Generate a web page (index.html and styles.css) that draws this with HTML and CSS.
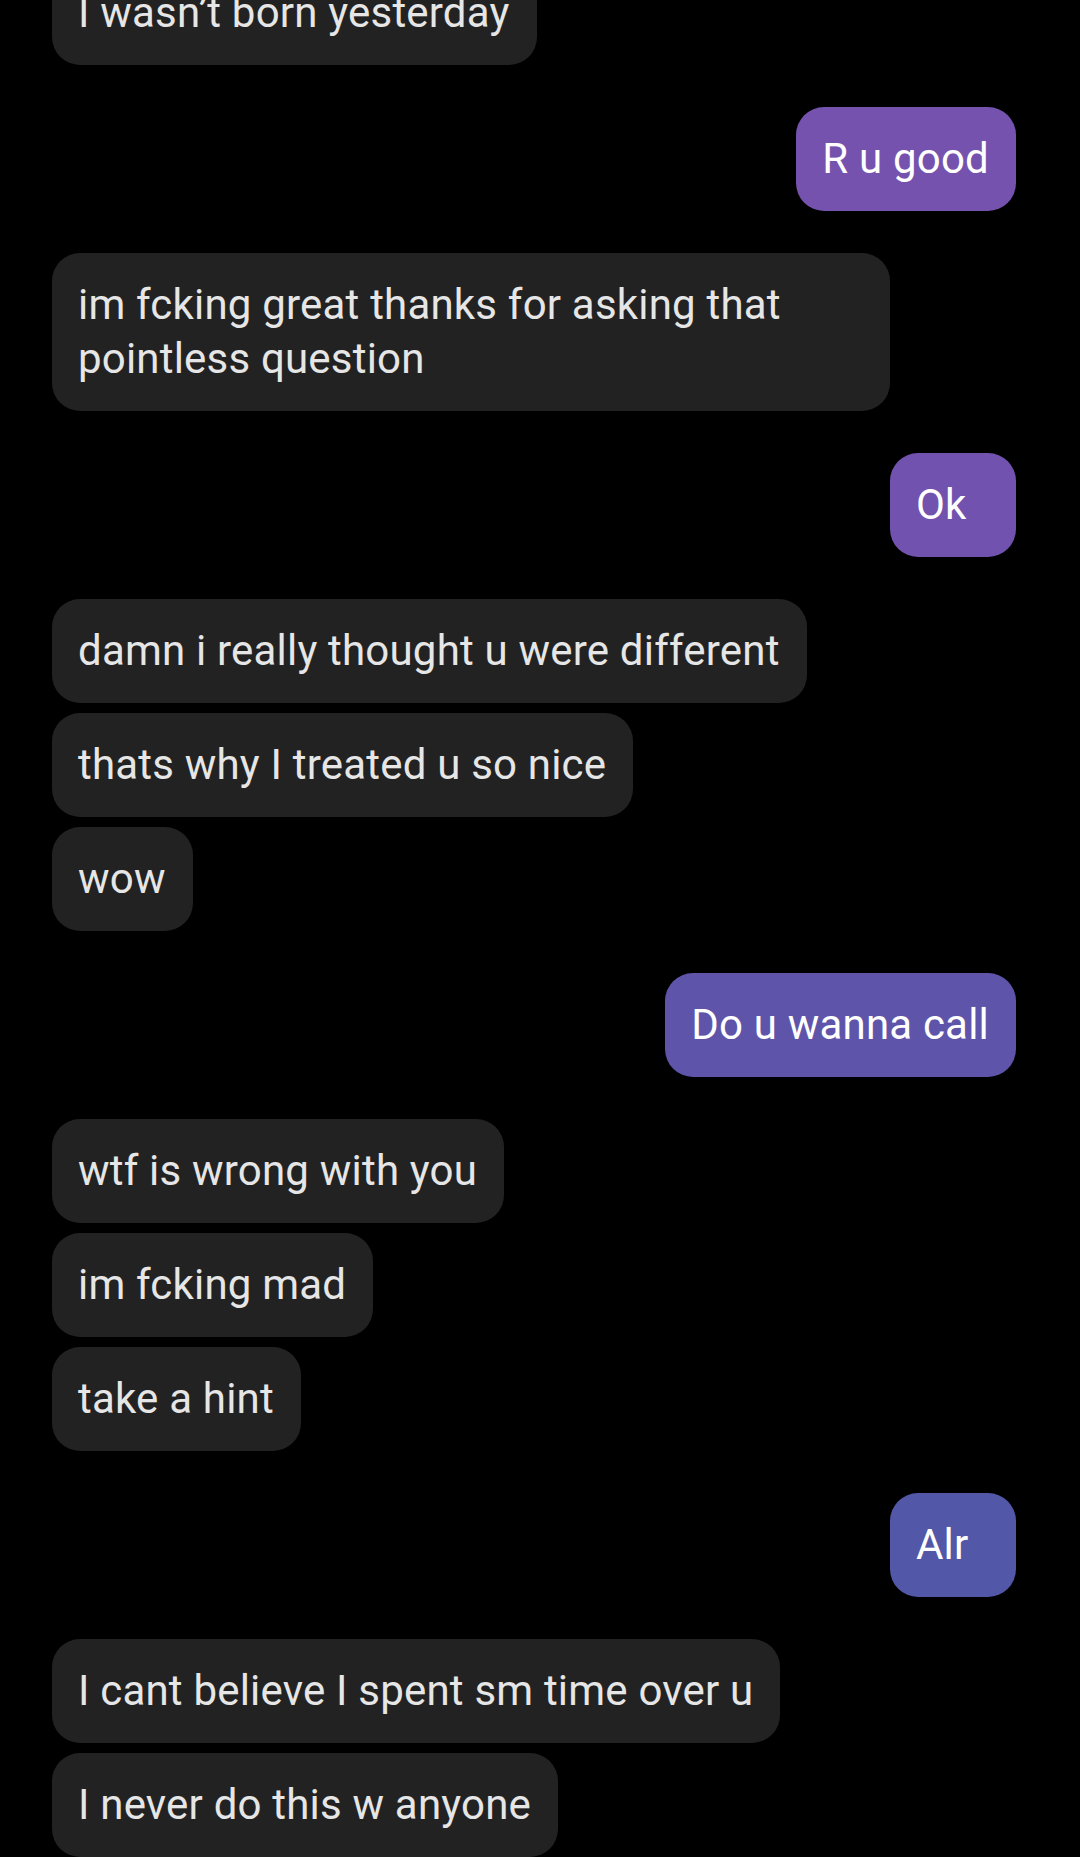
FILE: index.html
```html
<!DOCTYPE html>
<html lang="en">
<head>
<meta charset="utf-8">
<title>Chat</title>
<link rel="stylesheet" href="styles.css">
</head>
<body>
<main class="thread">
  <div class="group">
    <div class="msg them">I wasn’t born yesterday</div>
  </div>
  <div class="group">
    <div class="msg me me-1">R u good</div>
  </div>
  <div class="group">
    <div class="msg them">im fcking great thanks for asking that pointless question</div>
  </div>
  <div class="group">
    <div class="msg me me-2">Ok</div>
  </div>
  <div class="group">
    <div class="msg them">damn i really thought u were different</div>
    <div class="msg them">thats why I treated u so nice</div>
    <div class="msg them">wow</div>
  </div>
  <div class="group">
    <div class="msg me me-3">Do u wanna call</div>
  </div>
  <div class="group">
    <div class="msg them">wtf is wrong with you</div>
    <div class="msg them">im fcking mad</div>
    <div class="msg them">take a hint</div>
  </div>
  <div class="group">
    <div class="msg me me-4">Alr</div>
  </div>
  <div class="group">
    <div class="msg them">I cant believe I spent sm time over u</div>
    <div class="msg them">I never do this w anyone</div>
  </div>
</main>
</body>
</html>
```

FILE: styles.css
```css
html, body {
  margin: 0;
  padding: 0;
  background: #000;
}
body {
  width: 1080px;
  height: 1857px;
  overflow: hidden;
  font-family: Roboto, "Noto Sans", "Liberation Sans", sans-serif;
}
.thread {
  display: flex;
  flex-direction: column;
  gap: 42px;
  padding: 0 64px 0 52px;
  margin-top: -39px;
}
.group {
  display: flex;
  flex-direction: column;
  gap: 10px;
}
.msg {
  box-sizing: border-box;
  font-size: 42px;
  letter-spacing: 0.2px;
  line-height: 54px;
  padding: 25px 27px 25px 26px;
  border-radius: 28px;
  min-width: 126px;
  max-width: 838px;
}
.them {
  align-self: flex-start;
  background: #222222;
  color: #e6e6e6;
}
.me {
  align-self: flex-end;
  color: #ffffff;
}
.me-1 { background: #7552ae; }
.me-2 { background: #7153af; }
.me-3 { background: #5e55aa; }
.me-4 { background: #5357a8; }
```
